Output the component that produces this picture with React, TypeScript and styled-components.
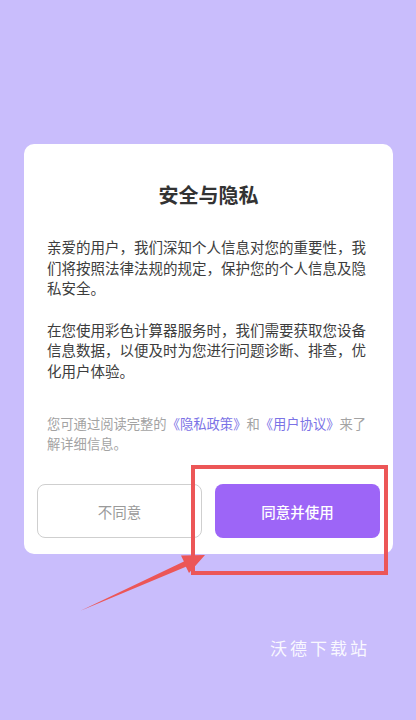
import React from 'react'
import styled, { createGlobalStyle } from 'styled-components'

const GlobalStyle = createGlobalStyle`
  html, body {
    margin: 0;
    padding: 0;
    background: #c9bdfc;
  }
  body {
    font-family: "Noto Sans CJK SC", "Noto Sans", sans-serif;
  }
`

const Page = styled.div`
  position: relative;
  width: 416px;
  height: 720px;
  background: #c9bdfc;
  padding-top: 144px;
  box-sizing: border-box;
  overflow: hidden;
`

const Card = styled.div`
  margin: 0 23px 0 24px;
  background: #ffffff;
  border-radius: 10px;
  padding: 37px 0 16px;
`

const Title = styled.h1`
  margin: 0;
  font-size: 20px;
  line-height: 28px;
  font-weight: 700;
  color: #333333;
  text-align: center;
`

const Body = styled.div`
  padding: 0 23px;
  margin-top: 28px;
`

const Para = styled.p<{ $gap?: number }>`
  margin: ${p => p.$gap || 0}px 0 0;
  font-size: 14.5px;
  line-height: 20.5px;
  color: #3d3d3d;
`

const Note = styled.p`
  margin: 33px 0 0;
  font-size: 13.3px;
  line-height: 20px;
  color: #a3a3a3;
`

const Link = styled.span`
  color: #7b72e6;
`

const ButtonRow = styled.div`
  display: grid;
  grid-template-columns: 1fr 1fr;
  gap: 13px;
  padding: 0 13px;
  margin-top: 30px;
`

const Button = styled.button<{ $primary?: boolean }>`
  height: 54px;
  border-radius: 8px;
  font-family: inherit;
  font-size: 14.5px;
  box-sizing: border-box;
  border: ${p => (p.$primary ? 'none' : '1px solid #cfcfcf')};
  background: ${p => (p.$primary ? '#9d65f7' : '#ffffff')};
  color: ${p => (p.$primary ? '#ffffff' : '#9a9a9a')};
  font-weight: ${p => (p.$primary ? 500 : 400)};
`

const Watermark = styled.div`
  margin-top: 82px;
  padding-right: 46px;
  text-align: right;
  font-size: 17px;
  line-height: 24px;
  letter-spacing: 3px;
  color: rgba(255, 255, 255, 0.92);
`

const Highlight = styled.div`
  position: absolute;
  left: 191px;
  top: 465px;
  width: 197px;
  height: 110px;
  box-sizing: border-box;
  border: 4px solid #ec5657;
  pointer-events: none;
`

const Arrow = styled.svg`
  position: absolute;
  left: 0;
  top: 0;
  pointer-events: none;
`

const App = () => (
  <Page>
    <GlobalStyle />
    <Card>
      <Title>安全与隐私</Title>
      <Body>
        <Para>
          亲爱的用户，我们深知个人信息对您的重要性，我们将按照法律法规的规定，保护您的个人信息及隐私安全。
        </Para>
        <Para $gap={21}>
          在您使用彩色计算器服务时，我们需要获取您设备信息数据，以便及时为您进行问题诊断、排查，优化用户体验。
        </Para>
        <Note>
          您可通过阅读完整的<Link>《隐私政策》</Link>和<Link>《用户协议》</Link>来了解详细信息。
        </Note>
      </Body>
      <ButtonRow>
        <Button>不同意</Button>
        <Button $primary>同意并使用</Button>
      </ButtonRow>
    </Card>
    <Watermark>沃德下载站</Watermark>
    <Highlight />
    <Arrow width="416" height="720" viewBox="0 0 416 720">
      <polygon
        points="80,611 185.9,566.8 189,573 205,555 181,555.5 183.9,561.4"
        fill="#ec5657"
      />
    </Arrow>
  </Page>
)

export default App
